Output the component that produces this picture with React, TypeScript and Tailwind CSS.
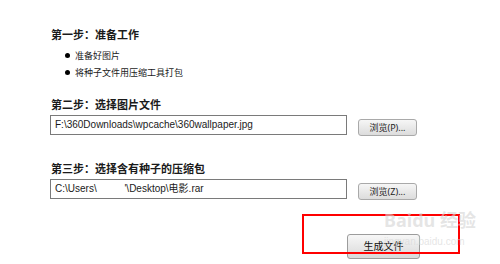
const CJK = "font-['Noto_Sans','Noto_Sans_CJK_SC',sans-serif]"
const FIELD = "font-['Liberation_Sans','Noto_Sans_CJK_SC',sans-serif]"

function Heading({ children }: { children: React.ReactNode }) {
  return (
    <div className={`${CJK} text-[11px] leading-[14px] font-bold text-[#1a1a1a]`}>{children}</div>
  )
}

function Browse({ label }: { label: string }) {
  return (
    <button
      className={`${CJK} w-[59px] h-[17px] rounded-[3px] border border-[#a9a9a9] bg-gradient-to-b from-[#f6f6f6] to-[#dcdcdc] text-[9px] leading-[15px] text-[#222]`}
    >
      {label}
    </button>
  )
}

function PathRow({ value, label }: { value: string; label: string }) {
  return (
    <div className="flex items-center">
      <div
        className={`${FIELD} w-[297px] h-[20px] border border-[#7a7a7a] bg-white pl-[4px] text-[10px] leading-[18px] text-[#1a1a1a] whitespace-pre`}
      >
        {value}
      </div>
      <div className="ml-[11px]">
        <Browse label={label} />
      </div>
    </div>
  )
}

export default function App() {
  return (
    <div className="relative w-[500px] h-[264px] overflow-hidden bg-white pl-[51px] pt-[28px]">
      <Heading>第一步：准备工作</Heading>
      <ul className={`${CJK} mt-[5px] ml-[14px] text-[9px] leading-[17px] text-[#1a1a1a]`}>
        {['准备好图片', '将种子文件用压缩工具打包'].map(t => (
          <li key={t} className="flex items-center">
            <span className="w-[5px] h-[5px] rounded-full bg-black mr-[5px]" />
            {t}
          </li>
        ))}
      </ul>

      <div className="mt-[17px]">
        <Heading>第二步：选择图片文件</Heading>
      </div>
      <div className="mt-[1px] -ml-[1px]">
        <PathRow value="F:\360Downloads\wpcache\360wallpaper.jpg" label="浏览(P)..." />
      </div>

      <div className="mt-[25px]">
        <Heading>第三步：选择含有种子的压缩包</Heading>
      </div>
      <div className="mt-[1px] -ml-[1px]">
        <PathRow value={"C:\\Users\\          '\\Desktop\\电影.rar"} label="浏览(Z)..." />
      </div>

      <div className="mt-[31px] ml-[296px]">
        <button
          className={`${CJK} w-[73px] h-[25px] rounded-[3px] border border-[#9c9c9c] bg-gradient-to-b from-[#f7f7f7] to-[#d9d9d9] text-[10px] text-[#111]`}
        >
          生成文件
        </button>
      </div>

      {/* annotation box */}
      <div className="absolute left-[302px] top-[214px] w-[158px] h-[40px] border-2 border-[#ff0000]" />

      {/* watermark */}
      <div className="absolute left-[384px] top-[210px] flex flex-col items-start pointer-events-none">
        <div className={`${CJK} text-[18px] leading-[20px] font-bold text-[#d4d4d4]/60`}>Baidu 经验</div>
        <div className="font-['Liberation_Sans',sans-serif] text-[10px] leading-[14px] mt-[5px] text-[#d4d4d4]/60">
          jingyan.baidu.com
        </div>
      </div>
    </div>
  )
}
